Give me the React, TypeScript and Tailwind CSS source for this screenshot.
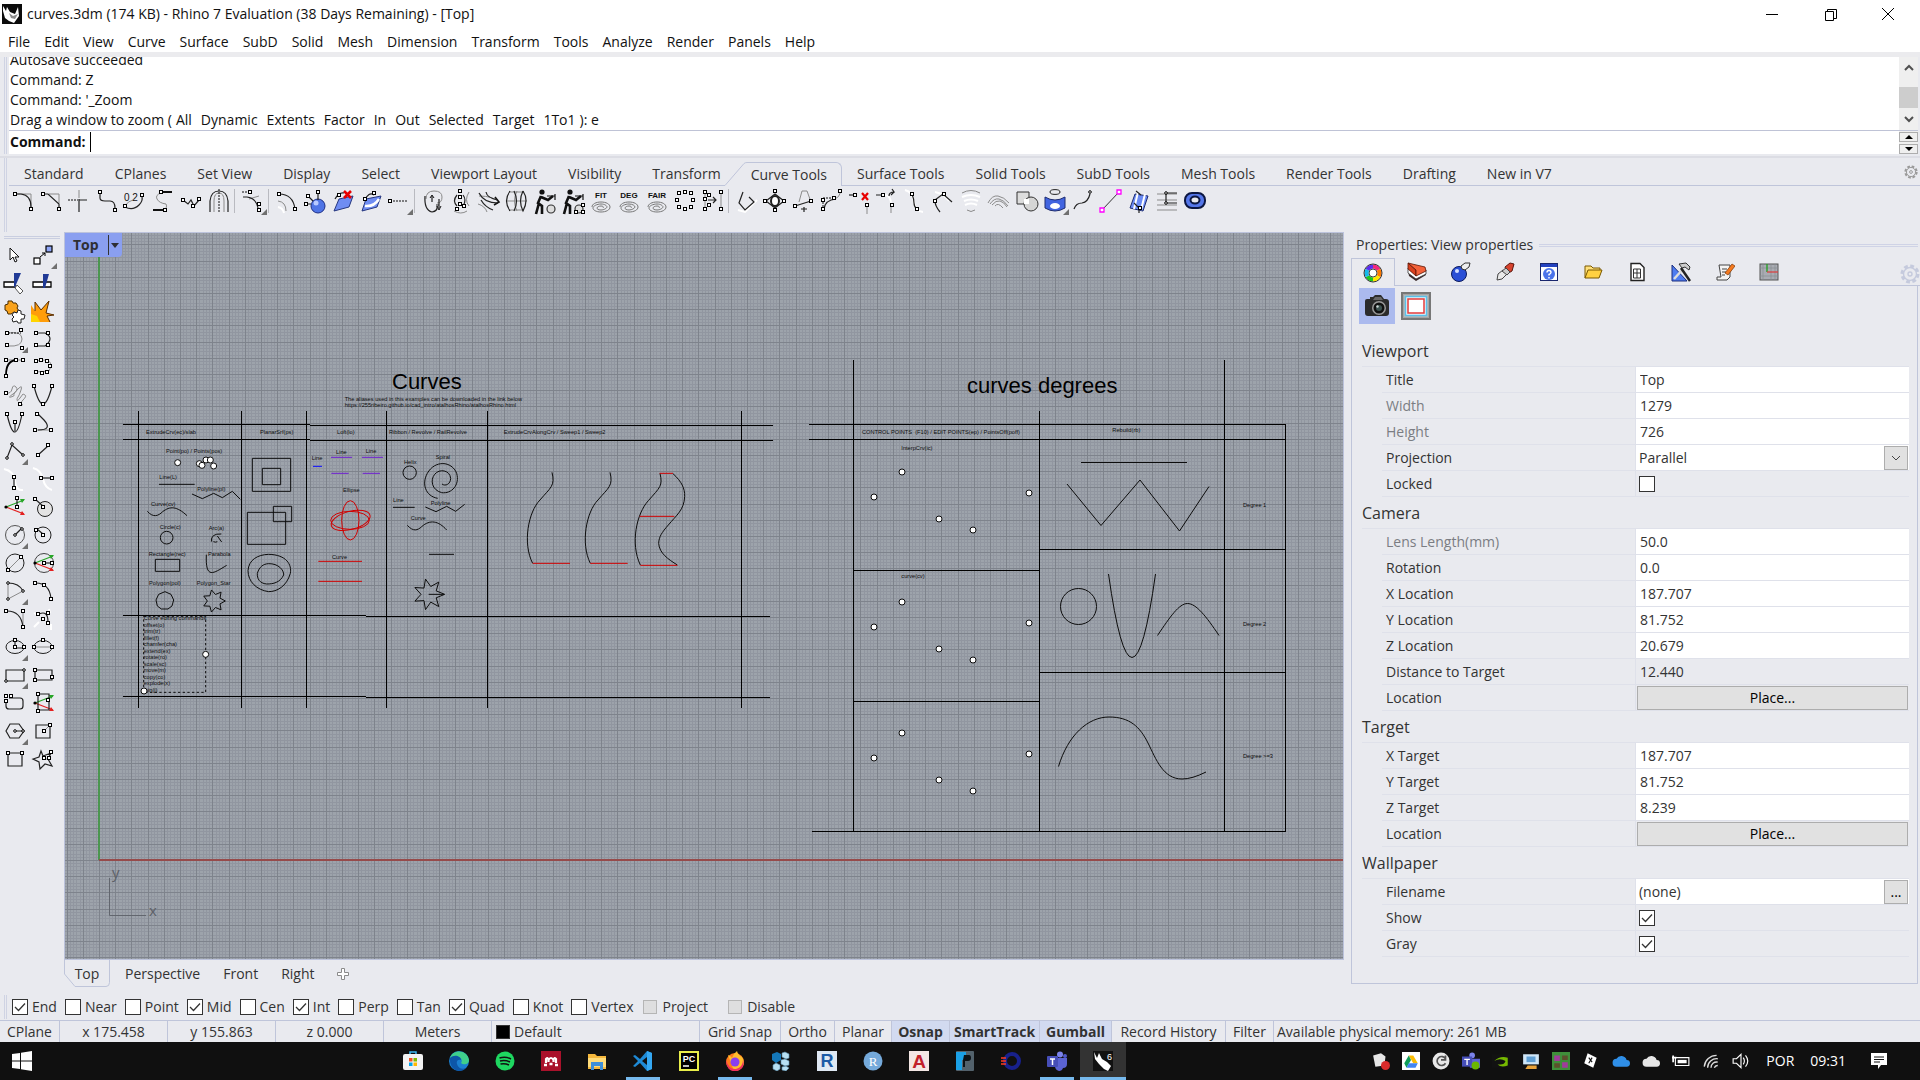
import React from "react";

type Pt = [number, number];

interface IconSpec {
  d?: string;
  g?: string;
  w?: string;
  dash?: string;
  pts?: Pt[];
  dots?: Pt[];
  more?: boolean;
  art?: React.ReactNode;
  name: string;
}

/* ---------- generic curve-tool glyph ---------- */
function Glyph({ spec }: { spec: IconSpec }) {
  return (
    <svg viewBox="0 0 28 28" className="size-7" fill="none" aria-hidden="true">
      {spec.w && <path d={spec.w} stroke="#fff" strokeWidth="2" />}
      {spec.g && <path d={spec.g} stroke="#8b8b8b" strokeWidth="1" />}
      {spec.dash && <path d={spec.dash} stroke="#111" strokeWidth="1" strokeDasharray="2 1" />}
      {spec.art}
      {spec.d && <path d={spec.d} stroke="#222" strokeWidth="1.2" />}
      {spec.pts?.map(([x, y], i) => (
        <rect key={i} x={x - 1.5} y={y - 1.5} width="3" height="3" fill="#fff" stroke="#000" strokeWidth="1" />
      ))}
      {spec.dots?.map(([x, y], i) => (
        <circle key={i} cx={x} cy={y} r="1.3" fill="#fff" stroke="#000" strokeWidth="1" />
      ))}
      {spec.more && <path d="M28 22v6h-6z" fill="#707070" />}
    </svg>
  );
}

const AXES = (
  <>
    <path d="M6 14L24 7" stroke="#27a527" strokeWidth="1.2" />
    <path d="M25 6l-5 0 2 4z" fill="#27a527" />
    <path d="M6 14L24 21" stroke="#e32020" strokeWidth="1.2" />
    <path d="M25 22l-5 0 2-4z" fill="#e32020" />
    <circle cx="6" cy="14" r="1.6" fill="#000" />
  </>
);

const SWIRL = (
  <path
    d="M5 20c0-3 4-5 9-5s9 2 9 5-4 5-9 5-8-2-8-4 4-4 8-4 6 2 6 3-3 3-6 3-4-1-4-2 2-2 4-2 3 1 2 2"
    stroke="#777"
    strokeWidth="1"
  />
);

function swirlWith(text: string) {
  return (
    <>
      <text x="14" y="11" textAnchor="middle" fontSize="8" fontWeight="700" fontFamily="Liberation Sans" fill="#111">
        {text}
      </text>
      {SWIRL}
    </>
  );
}

const RUNNER = (
  <>
    <circle cx="11" cy="5" r="2.6" fill="#111" />
    <path d="M10 9l-3 7 4 3v8M8 16l-3 11M10 10l7 3 5-4" stroke="#111" strokeWidth="2.6" />
    <path d="M16 9h8M24 7v6" stroke="#111" strokeWidth="1.2" />
    <circle cx="20" cy="22" r="4" stroke="#333" strokeWidth="1.2" fill="#ddd" />
  </>
);

const TOP_GROUPS: IconSpec[][] = [
  [
    { name: "Fillet curves", g: "M8 7h14v13", d: "M8 7h4Q22 8 22 20", pts: [[6, 7], [22, 22]] },
    { name: "Chamfer curves", g: "M12 7h10v9", d: "M8 7h3l11 10v4", pts: [[6, 7], [22, 22]] },
    { name: "Connect", g: "M14 3v8", dash: "M3 13h10", d: "M14 12v13M14 13h8" },
    { name: "Blend curves", d: "M7 6v5q0 3 5 3h5q5 0 5 7", pts: [[7, 5], [22, 23]] },
    {
      name: "Arc blend",
      g: "M4 19q3-5 8-6",
      d: "M4 20q8 4 14-2 4-4 3-8",
      art: (
        <text x="3" y="14" fontSize="10" fontFamily="Liberation Sans" fill="#111">0 2</text>
      ),
      pts: [[21, 8], [4, 19]],
    },
    { name: "Match curve", g: "M12 6q-6 2-4 6t9 5q2 4-3 6", art: <path d="M12 5h11M4 23h11" stroke="#111" strokeWidth="2" />, pts: [[12, 5], [16, 23]] },
    { name: "Symmetry", d: "M6 13l5 4 3-4 3 6 5-6", pts: [[6, 13], [22, 12], [16, 19]] },
    { name: "Offset curve", g: "M9 25V14q0-8 5-8t5 8v11", d: "M5 25V14q1-10 9-10t9 10v11", dash: "M14 2v24" },
  ],
  [{ name: "Adjustable blend", dash: "M3 5h10", d: "M4 10h4q9 1 11 11", g: "M10 12l10-3", pts: [[11, 5], [20, 17], [20, 23]], more: true }],
  [
    { name: "Tween curves", g: "M5 14q8 1 8 10", d: "M6 7q14 0 16 15", pts: [[6, 7], [22, 22]], w: "M5 20q5 1 6 6" },
    {
      name: "Project curve",
      art: (<><circle cx="17" cy="19" r="7" fill="#4f74e6" stroke="#1d2f86" /><circle cx="15" cy="16" r="2.5" fill="#b8c9ff" /></>),
      d: "M8 10l4 4M17 3v10M4 17h6",
      pts: [[17, 5], [5, 17], [7, 9]],
    },
    {
      name: "Pull curve",
      art: (<><path d="M10 12l14-3-4 11-15 4z" fill="#6f8df3" stroke="#26377f" /><path d="M15 4l7 7M22 4l-7 7" stroke="#e80000" strokeWidth="2.6" /></>),
      d: "M6 12q4-7 9-6",
      pts: [[10, 8]],
    },
    {
      name: "Curve on surface",
      art: (<><path d="M9 12l15-3-4 11-15 4z" fill="#6f8df3" stroke="#26377f" /><path d="M8 19q9 1 14-7" stroke="#fff" strokeWidth="2.5" /></>),
      d: "M7 14q5-10 10-6",
      pts: [[8, 12], [17, 6]],
    },
    { name: "Extract isocurve", dash: "M5 14h18", pts: [[5, 14]], more: true },
  ],
  [
    { name: "Revolve section", g: "M7 12q0-8 8-8t8 6-5 6", d: "M6 9q-1 14 7 16 6-1 5-6M13 9v6M20 12v9M17 18h3", art: <path d="M11 11l2-3 2 3M18 19l2 4 2-4" stroke="#111" /> },
    { name: "Cross section", g: "M7 24q7 4 13 0M22 5q-5 8 0 14", d: "M10 8q-5 6 0 11M16 8q4 5 0 11", pts: [[13, 4], [13, 10], [13, 17], [10, 22], [17, 19]] },
    { name: "Flow", g: "M4 9q14 0 20 6M3 17q7 2 9 8", d: "M4 6q5 10 19 10M6 13q4 7 12 10M11 5q1 6 12 8", art: <path d="M20 10l4 5-5 3" stroke="#111" strokeWidth="1.600" /> },
    { name: "Contour", g: "M6 5h15M6 23h15M14 4q-5 10 0 20M4 14h20", d: "M7 4q-7 10 0 20M11 4q5 10 0 20M20 4q6 9 0 20q-5-10 0-20" },
    { name: "Rebuild curve", art: RUNNER },
    { name: "Rebuild master", art: RUNNER, pts: [[24, 18], [17, 25], [24, 25]] },
    { name: "Fit curve", art: swirlWith("FIT") },
    { name: "Change degree", art: swirlWith("DEG") },
    { name: "Fair curve", art: swirlWith("FAIR") },
    { name: "Make periodic", pts: [[8, 6], [14, 5], [20, 6], [6, 13], [22, 13], [8, 20], [20, 20], [14, 22]] },
    { name: "Simplify", g: "M6 5v18M22 5v18", d: "M9 13h8M14 10l3 3-3 3", pts: [[6, 5], [6, 12], [6, 22], [22, 5], [22, 22], [10, 8], [10, 18]] },
  ],
  [
    { name: "Close curve", w: "M5 23l7 2 12-12", d: "M10 5L6 16l6 7 9-8-5-5" },
    { name: "Edit points", d: "M14 7l9 7-9 7-9-7z", art: <ellipse cx="14" cy="14" rx="4" ry="5" fill="#fff" stroke="#222" strokeWidth="2" />, pts: [[14, 4], [14, 23], [4, 14], [23, 14]] },
    { name: "Handlebar", g: "M10 15l3-11h5l4 11", d: "M6 19l16-5M15 20v5M12 22h6", pts: [[6, 19], [22, 14]] },
    { name: "Insert knot", g: "M17 12q7-2 6-9", dash: "M6 11h12M6 12v10", d: "M7 22q1-9 12-10", pts: [[6, 22], [23, 4], [17, 11], [6, 13]] },
    { name: "Delete knot", g: "M22 18v9", art: <path d="M17 6l6 7M23 6l-6 7" stroke="#e80000" strokeWidth="2.2" />, pts: [[10, 8], [22, 18]], d: "M4 8h5" },
    { name: "Insert kink", g: "M18 18v8", w: "M12 8q6 1 6 9", d: "M3 8h7M16 9q0-4 5-4l-2-3M21 5l-3 3", pts: [[10, 8], [19, 18]] },
    { name: "End bulge", w: "M4 3q8 2 9 12 1 9 9 10", d: "M11 7q2 5 2 9t3 6", pts: [[11, 7], [16, 22]] },
    { name: "Blend edge", w: "M6 5q9 2 14 9", d: "M6 13L14 7l9 8M6 14q0 5 5 11", pts: [[6, 14], [15, 7]] },
    { name: "Helix", g: "M5 6q9-5 18 0M10 23q4 3 8 0", w: "M5 10q9-4 18 0M7 14q7-3 14 0M8 18q6-3 12 0" },
    { name: "Offset multiple", g: "M3 16q4-8 10-7t11 7M5 17q4-6 9-5t9 7M7 18q4-5 8-4t7 6M10 19q3-4 8 2" },
    { name: "Curve boolean", art: (<><path d="M4 5h12v12H4z" fill="#ddd" stroke="#333" /><circle cx="18" cy="17" r="7" fill="#d5d5d5" stroke="#333" /><path d="M11 12h5v5h-5z" fill="#fff" /></>) },
    { name: "Smash surface", art: (<><path d="M4 10q10 6 20 0v11q-10 6-20 0z" fill="#4164e0" stroke="#1e2c70" /><ellipse cx="14" cy="19" rx="5" ry="3" fill="#fff" /><ellipse cx="14" cy="5" rx="5" ry="2.4" stroke="#222" /></>), more: true },
    { name: "Sketch", d: "M5 22q2-6 8-6 6-1 8-9", dots: [[21, 5]] },
    { name: "Mesh intersection line", art: (<><path d="M5 23L22 5" stroke="#333" /><path d="M3 21h4v4H3zM20 3h4v4h-4z" fill="#fff" stroke="#f0f" strokeWidth="1.3" /></>) },
    { name: "Plane cut", art: (<><path d="M10 7l13 2-5 15-13-3z" fill="#6c8cf5" stroke="#1e2c70" /><path d="M13 5l-4 17M20 7l-4 16" stroke="#fff" strokeWidth="2" /></>), d: "M11 4l5 4M14 20v6M9 16l6 6", pts: [[15, 21]] },
    { name: "Curve layout", g: "M4 7h20M4 13h20M4 18h20M4 23h20", d: "M13 6h11M13 16h11M13 6v10", dots: [[13, 6], [13, 16]] },
    { name: "SubD ring", art: (<><rect x="4" y="6" width="20" height="15" rx="7" fill="#5577ea" stroke="#0c1742" strokeWidth="2" /><ellipse cx="14" cy="13" rx="4.500" ry="3.500" fill="#e9eaef" stroke="#0c1742" strokeWidth="2" /></>) },
  ],
];

const SIDE_ICONS: IconSpec[] = [
  { name: "Select", art: <path d="M10 7v12l3-3 2 5 2-1-2-4h4z" fill="#fff" stroke="#111" /> },
  { name: "Drag", art: (<><rect x="17" y="5" width="6" height="6" fill="#8fa6f7" stroke="#000" strokeWidth="1.2" /><rect x="5" y="17" width="6" height="6" fill="#fff" stroke="#000" strokeWidth="1.2" /><path d="M11 16l5-4M13 12h3v3" stroke="#000" /></>), more: true },
  { name: "Trim", art: (<><path d="M4 13h11v5H4z" fill="#fff" stroke="#000" strokeWidth="1.3" /><path d="M14 4h7l-6 14h-1z" fill="#203a96" /><path d="M17 16l6 6-3 3-5-6z" fill="#fff" stroke="#555" /></>) },
  { name: "Split", art: (<><path d="M4 13h18v5H4z" fill="#fff" stroke="#000" strokeWidth="1.3" /><path d="M14 5h6l-4 14h-2z" fill="#203a96" /></>) },
  {
    name: "Join",
    art: (
      <>
        <path d="M5 8l3-1 0-3 4 0 1 2 3 0 2 3-1 2 2 3-3 2-2-1-3 2-3 0-1-3-2-1 0-3z" fill="#f9a21b" stroke="#4a2c00" />
        <path d="M14 15l3 1 1-3 3 1 0 3 4 1-1 4-3 0 0 4-3 0-1-2-4 1-1-3 2-2-2-2z" fill="#fff" stroke="#222" />
      </>
    ),
  },
  { name: "Explode", art: (<><path d="M2 8l4 6V5l6 8 8-9-3 12 8 2-7 1 3 6H2z" fill="#ff9d0a" /><path d="M2 17l6 2 3 6H2z" fill="#ffd400" /><path d="M6 14V5l6 8 8-9-3 12 8 2-7 1 3 6" stroke="#5b2e00" /></>) },
  { name: "Control point curve", g: "M8 8q14-2 14 6t-14 7", dash: "M8 8h13", pts: [[7, 8], [7, 20], [21, 5], [22, 23]], more: true },
  { name: "Interpolated curve", d: "M8 8h8q10 5 0 13H8", pts: [[7, 8], [19, 8], [7, 20], [19, 20]] },
  { name: "Handle curve", g: "M6 7h18", art: <path d="M6 22q0-14 10-15" stroke="#000" strokeWidth="1.800" />, pts: [[6, 7], [16, 7], [23, 7], [6, 23]] },
  { name: "Point curve", g: "M7 8q20-4 13 10l-13 1", pts: [[7, 8], [12, 7], [18, 8], [21, 13], [18, 19], [13, 20], [7, 19]] },
  { name: "Spiral helix", g: "M6 12q5 1 6-4t4-2-3 7-2 3 3-2 4-6 3 1-3 7-1 3 3-2 3-4 2 1-2 5 0 5", pts: [[6, 12], [20, 23]] },
  { name: "Parabola focus", d: "M5 5q9 36 18 0", pts: [[5, 5], [23, 5], [14, 23]] },
  { name: "Parabola vertex", d: "M7 5q8 36 15 0M15 13v9", pts: [[7, 5], [22, 5], [15, 13]] },
  { name: "Conic", d: "M9 5l6 6q9 10-6 10", g: "M7 21h15", pts: [[8, 5], [6, 21], [22, 21]] },
  { name: "Polyline", d: "M7 21l5-13 11 10", dots: [[7, 21], [12, 7], [23, 18]], more: true },
  { name: "Line", d: "M9 18L19 9", pts: [[9, 18], [19, 8]] },
  { name: "Perpendicular line", w: "M4 4q10 2 11 12t8 9", d: "M14 11v11", pts: [[14, 12], [14, 23]] },
  { name: "Tangent line", w: "M4 3q8 2 10 11t9 11", d: "M13 13h10", pts: [[12, 13], [23, 13]] },
  { name: "Line by axes", art: AXES, d: "M17 5v9", pts: [[17, 5], [17, 14]] },
  { name: "Circle tangent", art: <circle cx="16" cy="16" r="7.5" fill="#e3e3e3" stroke="#222" />, d: "M6 6l9 8", pts: [[6, 6], [14, 14]] },
  { name: "Circle", art: <circle cx="15" cy="14" r="9.5" stroke="#555" />, d: "M15 14l7-7", dots: [[15, 14], [22, 8]], more: true },
  { name: "Circle center", art: <circle cx="14" cy="14" r="8" stroke="#222" />, d: "M8 8l6 5", pts: [[7, 9], [14, 14]] },
  { name: "Circle diameter", art: <circle cx="15" cy="14" r="9" stroke="#222" />, g: "M8 21L21 8", pts: [[8, 21], [21, 8]] },
  { name: "Circle by axes", art: (<><circle cx="15" cy="14" r="9.5" stroke="#444" />{AXES}</>), d: "M15 14h7", pts: [[15, 14], [23, 14]] },
  { name: "Arc", g: "M8 22V5M8 22l15-8", d: "M8 6q11 0 15 8", dots: [[8, 6], [23, 14], [8, 22]], more: true },
  { name: "Arc start end", d: "M7 6q13 0 15 15", pts: [[6, 6], [15, 8], [22, 22]] },
  { name: "Arc tangent", g: "M23 7v15", d: "M7 6q14 0 16 16", pts: [[6, 6], [23, 6], [23, 22]] },
  { name: "Arc through points", w: "M5 22l5-5M5 8l5 3M22 25v-6M20 4l1 4", d: "M10 9q9-4 9 8", pts: [[9, 9], [19, 8], [14, 14], [19, 18]] },
  { name: "Ellipse", art: <ellipse cx="15" cy="14" rx="9" ry="6.5" stroke="#222" />, d: "M15 8v7h8", pts: [[15, 7], [15, 14], [24, 14]], more: true },
  { name: "Ellipse diameter", art: <ellipse cx="14" cy="14" rx="9" ry="6.5" stroke="#222" />, g: "M5 14h18", pts: [[5, 14], [23, 14], [14, 7]] },
  { name: "Rectangle", d: "M6 9h18v11H6z", dots: [[24, 9], [6, 20]], more: true },
  { name: "Rectangle center", d: "M6 9h17v10H6z", pts: [[6, 9], [6, 19], [23, 16]] },
  { name: "Rounded rectangle", d: "M9 9h11q3 0 3 3v5q0 3-3 3h-11q-3 0-3-3v-6", pts: [[6, 7], [11, 7], [6, 12]] },
  { name: "Rectangle by axes", art: AXES, d: "M9 5h11v16H9z", pts: [[9, 5], [9, 22], [19, 11]] },
  { name: "Polygon", d: "M10 7h9l5 7-5 7h-9l-4-7z M15 14h8", dots: [[15, 14], [23, 14]], more: true },
  { name: "Square polygon", d: "M7 8h14v13H7z", g: "M15 14l6-6", pts: [[15, 14], [21, 8]] },
  { name: "Square edge", d: "M8 8h14v13H8z", pts: [[8, 8], [22, 8]] },
  { name: "Star", g: "M14 14h6", d: "M12 6l2 5 8-3-3 6 4 7-7-2-5 5-1-7-6-3 6-2z", pts: [[15, 13], [20, 13], [22, 7]] },
];

/* ---------- shared pieces ---------- */
function CheckBox({ id, label, checked = false, disabled = false }: { id: string; label?: string; checked?: boolean; disabled?: boolean }) {
  return (
    <span className="relative grid shrink-0 place-items-center">
      <input
        id={id}
        type="checkbox"
        aria-label={label}
        defaultChecked={checked}
        disabled={disabled}
        className="peer size-4 appearance-none border border-[#333] bg-white disabled:size-3.5 disabled:border-[#b5b5b5] disabled:bg-[#dededf]"
      />
      <svg viewBox="0 0 16 16" className="pointer-events-none absolute hidden size-4 peer-checked:block" fill="none">
        <path d="M3 8l3.5 3.5L13 4.500" stroke="#333" strokeWidth="1.3" />
      </svg>
    </span>
  );
}

function Gear({ className }: { className: string }) {
  return (
    <svg viewBox="0 0 20 20" className={className} fill="none" stroke="currentColor" aria-hidden="true">
      <circle cx="10" cy="10" r="8" strokeWidth="3" strokeDasharray="3.8 2.480" />
      <circle cx="10" cy="10" r="6.500" strokeWidth="1.400" />
      <circle cx="10" cy="10" r="2" strokeWidth="1.400" />
    </svg>
  );
}

/* ---------- title, menu, command ---------- */
const MENUS = ["File", "Edit", "View", "Curve", "Surface", "SubD", "Solid", "Mesh", "Dimension", "Transform", "Tools", "Analyze", "Render", "Panels", "Help"];

function RhinoLogo({ className }: { className: string }) {
  return (
    <svg viewBox="0 0 20 20" className={className} aria-hidden="true">
      <rect width="20" height="20" fill="#0b0b0b" />
      <path d="M1 2l3 5 1-4 3 5 5 2 3-7 1 9-5 7-5-2-4-3-2-7z" fill="#fff" />
      <path d="M7 9l4 3 5-2-3 5-4-1z" fill="#8d8d8d" />
    </svg>
  );
}

function TitleBar() {
  return (
    <header className="bg-white">
      <div className="flex h-7 items-center pl-0.5 pr-[3px]">
        <RhinoLogo className="size-5" />
        <h1 className="ml-[5px] flex-1 text-sm">curves.3dm (174 KB) - Rhino 7 Evaluation (38 Days Remaining) - [Top]</h1>
        <button aria-label="Minimize" className="grid h-7 w-[58px] place-items-center">
          <svg viewBox="0 0 12 12" className="size-3"><path d="M0 6.500h12" stroke="#000" /></svg>
        </button>
        <button aria-label="Restore" className="grid h-7 w-[58px] place-items-center">
          <svg viewBox="0 0 13 13" className="size-[13px]" fill="none" stroke="#000"><path d="M1.500 3.500h8v9h-8zM3.500 3.500v-2h9v9h-3" /></svg>
        </button>
        <button aria-label="Close" className="grid h-7 w-[58px] place-items-center">
          <svg viewBox="0 0 12 12" className="size-3" fill="none" stroke="#000"><path d="M0 0l12 12M12 0L0 12" /></svg>
        </button>
      </div>
      <nav className="flex h-6 items-center pl-px pt-[3px] text-sm">
        {MENUS.map((m) => (
          <button key={m} className="px-[7px]">{m}</button>
        ))}
      </nav>
    </header>
  );
}

const ZOOM_OPTIONS = ["All", "Dynamic", "Extents", "Factor", "In", "Out", "Selected", "Target", "1To1"];

function CommandArea() {
  return (
    <section className="flex border-b-2 border-t-[5px] border-[#dcdde4] border-t-[#ebebee] pb-0.5 pl-1 text-sm">
      <div className="mr-0.5 w-[3px] shrink-0 border-x border-[#cfd3e3]" />
      <div className="flex min-w-0 flex-1 flex-col bg-white">
        <div className="flex h-[73px] flex-col justify-end overflow-hidden leading-5">
          {["Autosave succeeded", "Command: Z", "Command: '_Zoom"].map((t) => (
            <p key={t} className="shrink-0 pl-px">{t}</p>
          ))}
          <p className="flex shrink-0 gap-1 whitespace-pre pl-px">
            Drag a window to zoom (
            <span className="flex gap-[9px]">
              {ZOOM_OPTIONS.map((o) => (
                <button key={o}>{o}</button>
              ))}
            </span>
            ): e
          </p>
        </div>
        <div className="flex h-6 items-center border-t border-[#bfc3d6] pb-0.5 pl-px">
          <label htmlFor="cmd" className="font-bold">Command:</label>
          <span className="ml-1 h-5 w-px bg-black" />
          <input id="cmd" className="flex-1 outline-none" />
        </div>
      </div>
      <div className="mr-0.5 flex w-[19px] flex-col bg-[#efefef]">
        <div className="flex h-[73px] flex-col items-center">
          <button aria-label="Scroll up" className="grid h-[22px] place-items-center">
            <svg viewBox="0 0 10 8" className="h-2 w-2.5" fill="none"><path d="M1 6l4-4 4 4" stroke="#505050" strokeWidth="2" /></svg>
          </button>
          <span className="mt-2 h-[21px] w-full bg-[#cdcdcd]" />
          <button aria-label="Scroll down" className="grid h-[22px] place-items-center">
            <svg viewBox="0 0 10 8" className="h-2 w-2.5" fill="none"><path d="M1 2l4 4 4-4" stroke="#505050" strokeWidth="2" /></svg>
          </button>
        </div>
        <div className="flex h-6 flex-col gap-0.5 border-t border-[#bfc3d6] pt-px">
          <button aria-label="Previous command" className="grid h-2.5 place-items-center border border-[#adadad] bg-[#efefef]">
            <svg viewBox="0 0 8 4" className="h-1 w-2"><path d="M4 0l4 4H0z" /></svg>
          </button>
          <button aria-label="Next command" className="grid h-2.5 place-items-center border border-[#adadad] bg-[#efefef]">
            <svg viewBox="0 0 8 4" className="h-1 w-2"><path d="M0 0h8L4 4z" /></svg>
          </button>
        </div>
      </div>
    </section>
  );
}

/* ---------- tool tabs ---------- */
const TABS_BEFORE = ["Standard", "CPlanes", "Set View", "Display", "Select", "Viewport Layout", "Visibility", "Transform"];
const TABS_AFTER = ["Surface Tools", "Solid Tools", "SubD Tools", "Mesh Tools", "Render Tools", "Drafting", "New in V7"];

function ToolTabs() {
  return (
    <section className="flex h-[74px] flex-col pl-1">
      <div className="flex flex-1 items-stretch">
        <div className="mr-0.5 w-[3px] shrink-0 border-x border-[#cfd3e3]" />
        <div className="min-w-0 flex-1">
          <div className="flex h-7 items-end text-sm text-[#333]">
            {TABS_BEFORE.map((t, i) => (
              <button key={t} className={"h-full whitespace-nowrap border-b border-[#bfc5da] pt-[5px] " + (i === 7 ? "pl-[15px]" : "pl-[15px] pr-4")}>{t}</button>
            ))}
            <svg viewBox="0 0 30 24" className="h-6 w-[30px] shrink-0" fill="none">
              <path d="M0 23.500h4L23 1.500q1-1 3-1h4" stroke="#bfc5da" />
            </svg>
            <button className="h-6 whitespace-nowrap rounded-tr-md border-r border-t border-[#bfc5da] pr-3.5">Curve Tools</button>
            {TABS_AFTER.map((t) => (
              <button key={t} className="h-full whitespace-nowrap border-b border-[#bfc5da] pl-[15px] pr-4 pt-[5px]">{t}</button>
            ))}
            <div className="flex h-full flex-1 items-center justify-end border-b border-[#bfc5da] pr-0.5 text-[#9a9a9a]">
              <button aria-label="Toolbar options"><Gear className="size-3.5" /></button>
            </div>
          </div>
          <div className="flex items-center pt-px">
            {TOP_GROUPS.map((g, gi) => (
              <React.Fragment key={gi}>
                {gi > 0 && <span className="ml-px mr-1 h-6 w-px bg-[#b9bac0]" />}
                {g.map((s) => (
                  <button key={s.name} title={s.name}><Glyph spec={s} /></button>
                ))}
              </React.Fragment>
            ))}
          </div>
        </div>
      </div>
    </section>
  );
}

/* ---------- viewport drawing ---------- */
const STEP = 16.2;

function gridPath(minor: boolean) {
  const parts: string[] = [];
  const div = minor ? STEP / 5 : STEP;
  for (let k = -200; k < 720; k++) {
    if (minor && k % 5 === 0) continue;
    const x = Math.round(99 + k * div) + 0.5;
    const y = Math.round(860 + k * div) + 0.5;
    if (x > 60 && x < 2400) parts.push(`M${x} 225V1400`);
    if (y > 225 && y < 1400) parts.push(`M60 ${y}H2400`);
  }
  return parts.join("");
}

const MINOR = gridPath(true);
const MAJOR = gridPath(false);

function T({ x, y, children }: { x: number; y: number; children: React.ReactNode }) {
  return <text x={x} y={y} className="whitespace-pre" fill="#0c0c0c" stroke="none">{children}</text>;
}

function Nodes({ at, r }: { at: Pt[]; r: number }) {
  return (
    <>
      {at.map(([x, y], i) => (
        <circle key={i} cx={x} cy={y} r={r} fill="#fff" />
      ))}
    </>
  );
}

function star(cx: number, cy: number, ro: number, ri: number, n: number) {
  const p: string[] = [];
  for (let i = 0; i < n * 2; i++) {
    const a = (i * Math.PI) / n;
    const r = i % 2 ? ri : ro;
    p.push(`${(cx + r * Math.cos(a)).toFixed(1)} ${(cy + r * Math.sin(a)).toFixed(1)}`);
  }
  return "M" + p.join("L") + "Z";
}

const EDIT_LINES = ["Curve editing commands", "offset(o)", "trim(tr)", "fillet(f)", "chamfer(cha)", "extend(ex)", "rotate(ro)", "scale(sc)", "move(m)", "copy(co)", "explode(x)", "join(j)"];

const DEGREE_NODES: Pt[] = [[874, 497], [902, 472], [939, 519], [973, 530], [1029, 493]];

function CadDrawing() {
  return (
    <svg className="block size-full" fill="none" role="img" aria-label="Top view drawing">
      <g transform="translate(-65 -233)">
        <path d={MINOR} stroke="#9196a0" shapeRendering="crispEdges" />
        <path d={MAJOR} stroke="#7e838c" shapeRendering="crispEdges" />
        <path d="M99 225V860" stroke="#4b9650" strokeWidth="2" shapeRendering="crispEdges" />
        <path d="M99 860H2400" stroke="#964b4b" strokeWidth="2" shapeRendering="crispEdges" />

        <g fontFamily="Liberation Sans" fill="#000" fontSize="22">
          <text x="392" y="389">Curves</text>
          <text x="967" y="393">curves degrees</text>
        </g>

        <g stroke="#000" strokeWidth="1" shapeRendering="crispEdges">
          <path d="M138.500 411V708M241.500 411V708M306.500 411V708M386.500 411V708M487.500 411V708M741.500 411V708" />
          <path d="M123 424.500H310M310 425.500H773M123 439.500H310M310 440.500H773M123 615.500H366M366 616.500H770M123 696.500H366M366 697.500H770" />
          <path d="M853.500 360V831M1039.500 411V831M1224.500 360V831M1285.500 424V831" />
          <path d="M809 424.500H1285M809 439.500H1285M1039 549.500H1285M853 570.500H1039M1039 672.500H1285M853 701.500H1039M812 831.500H1286" />
        </g>

        {/* curve catalogue, drawn at three units per pixel */}
        <g transform="translate(120 360) scale(0.33333)" fontFamily="Liberation Sans" fontSize="17" stroke="#0c0c0c" strokeWidth="3">
          <T x={674} y={123}>The aliases used in this examples can be downloaded in the link below</T>
          <T x={674} y={141}>https://255ribeiro.github.io/cad_intro/atalhosRhino/atalhosRhino.html</T>
          <T x={78} y={221}>ExtrudeCrv(ec)/slab</T>
          <T x={420} y={223}>PlanarSrf(ps)</T>
          <T x={651} y={221}>Loft(lo)</T>
          <T x={807} y={221}>Ribbon / Revolve / RailRevolve</T>
          <T x={1151} y={221}>ExtrudeCrvAlongCrv / Sweep1 / Sweep2</T>
          <T x={138} y={279}>Point(po) / Points(pos)</T>
          <T x={118} y={358}>Line(L)</T>
          <T x={232} y={394}>Polyline(pl)</T>
          <T x={93} y={438}>Curve(cv)</T>
          <T x={119} y={506}>Circle(c)</T>
          <T x={266} y={510}>Arc(a)</T>
          <T x={86} y={587}>Rectangle(rec)</T>
          <T x={264} y={587}>Parabola</T>
          <T x={87} y={676}>Polygon(pol)</T>
          <T x={230} y={674}>Polygon_Star</T>
          <T x={575} y={301}>Line</T>
          <T x={648} y={281}>Line</T>
          <T x={737} y={279}>Line</T>
          <T x={669} y={397}>Ellipse</T>
          <T x={636} y={597}>Curve</T>
          <T x={852} y={312}>Helix</T>
          <T x={947} y={296}>Spiral</T>
          <T x={819} y={427}>Line</T>
          <T x={932} y={434}>Polyline</T>
          <T x={872} y={481}>Curve</T>
          {EDIT_LINES.map((l, i) => (
            <T key={l} x={71} y={781 + i * 19.500}>{l}</T>
          ))}

          <path d="M117 373H224M216 402L247 416 281 400 307 413 337 394 361 418M82 454C100 474 115 468 128 455C150 438 170 438 201 467" />
          <circle cx="140" cy="533" r="19" />
          <path d="M274 545Q272 520 304 522M280 545Q288 548 292 545M292 528L305 546" />
          <path d="M106 598h73v36h-73zM259 584C256 660 280 640 320 616" />
          <path d="M135 695l18 8 8 17-5 18-12 9h-20l-12-9-4-18 8-17z" />
          <path d={star(282, 723, 34, 20, 7)} />
          <Nodes at={[[173, 308], [238, 311], [258, 300], [271, 300], [246, 316], [281, 318]]} r={9} />
          <path d="M397 295h115v99H397zM427 325h55v49h-55zM382 457h115v96H382zM460 439h55v46h-55z" />
          <path d="M446 583C500 584 516 615 511 640C500 680 470 695 446 695C410 690 384 665 384 632C386 600 412 584 446 583Z" />
          <path d="M445 611C475 610 492 630 491 645C480 668 460 672 440 672C418 670 411 655 412 640C418 620 430 612 445 611Z" />
          <path d="M579 319h27" stroke="#0a0aff" />
          <path d="M633 292h63M726 292h63M634 340h52M728 340h52" stroke="#6e1fd0" />
          <g stroke="#d00000">
            <ellipse cx="691" cy="481" rx="26" ry="59" />
            <ellipse cx="690" cy="481" rx="58" ry="27" />
            <ellipse cx="692" cy="481" rx="60" ry="27" transform="rotate(-15 692 481)" />
            <path d="M595 604h131M595 664h131" />
          </g>
          <circle cx="869" cy="338" r="20" />
          <path d="M953 415C915 408 905 370 922 340C944 300 995 302 1010 340C1020 375 995 402 965 398C935 390 930 360 944 343C958 325 990 330 992 355C992 372 976 380 966 372" />
          <path d="M819 442h65M916 441L948 455 980 439 1007 454 1034 433M862 496C880 516 893 511 905 500C930 478 955 482 980 510M927 583h75M926 703h46" />
          <path d={star(927, 703, 47, 24, 7)} />
          <path d="M71 769H257V997H71Z" strokeDasharray="7 7" />
          <Nodes at={[[257, 883], [72, 993]]} r={9} />
        </g>

        <g transform="translate(480 400) scale(0.33333)" stroke="#0c0c0c" strokeWidth="3">
          <path d="M216 217C226 258 212 262 180 300C145 335 127 430 158 490" />
          <path d="M390 217C400 258 386 262 354 300C319 335 301 430 331 490" />
          <path d="M540 220C549 258 540 262 505 302C470 340 450 430 481 495" />
          <path d="M579 221C605 245 615 265 614 290C612 330 590 345 565 375C545 398 537 410 536 430C538 460 565 478 592 495" />
          <path d="M158 490h112M331 490h112M539 220h40M479 349h104M481 496h111" stroke="#d00000" />
        </g>

        <g transform="translate(840 360) scale(0.33333)" fontFamily="Liberation Sans" fontSize="17">
          <T x={66} y={223}>CONTROL POINTS  (F10) / EDIT POINTS(ep) / PointsOff(poff)</T>
          <T x={817} y={217}>Rebuild(rb)</T>
          <T x={184} y={270}>InterpCrv(ic)</T>
          <T x={184} y={655}>curve(cv)</T>
          <T x={1209} y={442}>Degree 1</T>
          <T x={1209} y={799}>Degree 2</T>
          <T x={1209} y={1193}>Degree &gt;=3</T>
        </g>
        <g stroke="#0c0c0c">
          {[0, 130, 261].map((dy) => (
            <Nodes key={dy} at={DEGREE_NODES.map(([x, y]): Pt => [x, y + dy])} r={3} />
          ))}
          <path d="M1081 462.500H1187M1067 484L1101 525.500 1140 480 1179.500 531 1209 486.500" />
          <circle cx="1078.500" cy="606.500" r="18" />
          <path d="M1108.500 574Q1132 741 1155.500 574" />
          <path d="M1157.500 635.500C1170 617 1179 603.500 1187.500 603.500S1206 616 1219 635.500" />
          <path d="M1058.500 766.500C1068 735 1088 717 1109 717S1140 727 1148 743S1163 779 1182 779Q1192 779 1206 772" />
        </g>

        <path d="M109.500 878V915.500H146" stroke="#62666e" />
        <g fontFamily="Open Sans" fontSize="15" fill="#5d6168">
          <text x="112" y="878">y</text>
          <text x="149" y="916">x</text>
        </g>
      </g>
    </svg>
  );
}

function Viewport() {
  return (
    <main className="flex min-w-0 flex-1 flex-col">
      <div className="relative min-h-0 flex-1 overflow-hidden border border-[#bcc3dc] bg-[#9da3ab]">
        <CadDrawing />
        <button className="absolute left-0 top-0 flex h-6 items-center rounded-br bg-[#8a9ff0] text-sm font-bold text-[#2e2e33]">
          <span className="pl-2 pr-[9px] leading-5">Top</span>
          <span className="grid h-5 w-3.5 place-items-center border-l border-[#333]">
            <svg viewBox="0 0 8 5" className="h-[5px] w-2"><path d="M0 0h8L4 5z" fill="#2e2e33" /></svg>
          </span>
        </button>
      </div>
      <div className="flex h-[30px] items-start text-sm text-[#333]">
        <button className="relative h-7 w-[46px]">
          <svg viewBox="0 0 46 28" className="absolute inset-0 size-full" fill="none">
            <path d="M.5 0V14L11 26.500H42q3.500 0 3.500-4V0" stroke="#bfc5da" />
          </svg>
          Top
        </button>
        {["Perspective", "Front", "Right"].map((t) => (
          <button key={t} className="h-7 pl-[15px] pr-2">{t}</button>
        ))}
        <button aria-label="Add viewport" className="ml-3.5 h-7">
          <svg viewBox="0 0 12 12" className="size-3" fill="#fff" stroke="#8a8a8a"><path d="M4.500.5h3v4h4v3h-4v4h-3v-4h-4v-3h4z" /></svg>
        </button>
      </div>
    </main>
  );
}

function Sidebar() {
  return (
    <aside className="w-16 shrink-0 pt-1">
      <div className="mx-1 h-[3px] border-y border-[#c9cee0]" />
      <div className="grid w-[58px] grid-cols-2 pt-0.5">
        {SIDE_ICONS.map((s) => (
          <button key={s.name} title={s.name} className="h-7"><Glyph spec={s} /></button>
        ))}
      </div>
    </aside>
  );
}

/* ---------- properties panel ---------- */
const PANEL_TABS: { name: string; art: React.ReactNode }[] = [
  {
    name: "Properties",
    art: (
      <g strokeWidth="4" fill="none">
        <path d="M10 3.500a6.500 6.500 0 0 1 5.600 3.250" stroke="#f2267a" />
        <path d="M15.600 6.750a6.500 6.500 0 0 1 0 6.500" stroke="#ff7a00" />
        <path d="M15.600 13.250A6.500 6.500 0 0 1 10 16.500" stroke="#ffe600" />
        <path d="M10 16.500a6.500 6.500 0 0 1-5.600-3.250" stroke="#1fc61f" />
        <path d="M4.400 13.250a6.500 6.500 0 0 1 0-6.500" stroke="#16b9ea" />
        <path d="M4.400 6.750A6.500 6.500 0 0 1 10 3.500" stroke="#5b2df0" />
        <circle cx="10" cy="10" r="9" strokeWidth="1" stroke="#333" />
        <circle cx="10" cy="10" r="4" strokeWidth="1" stroke="#444" fill="#fff" />
      </g>
    ),
  },
  {
    name: "Layers",
    art: (
      <>
        <path d="M1 9l1 5 7 5 10-6v-4l-10 6z" fill="#3a2a2a" />
        <path d="M1 6l8 7 10-5v4L9 17 1 11z" fill="#fff" stroke="#333" strokeWidth=".8" />
        <path d="M1 1l8 7v6L1 7z" fill="#d9401d" stroke="#5b1505" strokeWidth=".8" />
        <path d="M1 1l17 4 1 4-10 5V8z" fill="#f4623a" stroke="#5b1505" strokeWidth=".8" />
      </>
    ),
  },
  {
    name: "Rendering",
    art: (
      <>
        <circle cx="8" cy="12" r="7.500" fill="#2a4fd6" stroke="#0b1a5c" />
        <circle cx="6" cy="9" r="2" fill="#d5e0ff" />
        <path d="M10 4l4-3 5 0-1 4-4 3-3-1z" fill="#eee" stroke="#333" />
      </>
    ),
  },
  {
    name: "Materials",
    art: (
      <>
        <path d="M2 18l1-6 5-4 4 4-5 5z" fill="#e9e9e9" stroke="#444" />
        <path d="M10 5l5-4 4 1-2 7-5 3z" fill="#d7432e" stroke="#5a160d" />
        <path d="M7 9l4-3 4 4-3 3z" fill="#ccc" stroke="#444" />
      </>
    ),
  },
  {
    name: "Help",
    art: (
      <>
        <rect x="1.500" y="1.500" width="17" height="17" fill="#fff" stroke="#19266d" />
        <rect x="2" y="2" width="16" height="3" fill="#2443c0" />
        <circle cx="10" cy="12" r="6" fill="#4b73ea" />
        <path d="M8 10.500q0-2 2-2t2 2q0 1-2 2v1M10 15v1.500" stroke="#fff" strokeWidth="1.400" fill="none" />
      </>
    ),
  },
  {
    name: "Libraries",
    art: (
      <>
        <path d="M2 16V4h6l2 2h7v3" fill="#ffe07a" stroke="#7a5900" />
        <path d="M2 16l3-8h14l-3 8z" fill="#ffd141" stroke="#7a5900" />
      </>
    ),
  },
  {
    name: "Page layout",
    art: (
      <>
        <path d="M4 1.500h9l4 4v13H4z" fill="#fff" stroke="#222" strokeWidth="1.400" />
        <path d="M6.500 7h7v9h-7zM10 7v9M6.500 11h7" fill="none" stroke="#333" />
      </>
    ),
  },
  {
    name: "Tools",
    art: (
      <>
        <path d="M1 3v16h15z" fill="#4e7cf0" stroke="#1c2f80" />
        <path d="M3 17L13 6" stroke="#ddd" strokeWidth="2.500" />
        <path d="M10 6l9 13" stroke="#222" strokeWidth="2.500" />
        <path d="M8 2l7-1 4 4-1 3-4-3-3 1z" fill="#ccc" stroke="#333" />
      </>
    ),
  },
  {
    name: "Notes",
    art: (
      <>
        <path d="M4 3h11v12l-3 3H2v-3h4z" fill="#f4f4f4" stroke="#444" />
        <path d="M7 7h5M7 10h4M7 13h3" stroke="#444" />
        <path d="M10 11l7-9 3 2-7 9z" fill="#f57a1f" stroke="#7c3300" strokeWidth=".7" />
      </>
    ),
  },
  {
    name: "Grid",
    art: (
      <>
        <rect x="1" y="2" width="18" height="16" fill="#a9acb3" stroke="#555" />
        <path d="M4 2v16M12 2v16M16 2v16M1 6h18M1 14h18" stroke="#888c94" strokeWidth=".7" />
        <path d="M8 2v8" stroke="#21a021" strokeWidth="1.300" />
        <path d="M8 10h11" stroke="#d84343" strokeWidth="1.300" />
      </>
    ),
  },
];

type Row = { label: string; kind?: "text" | "select" | "check" | "static" | "button" | "file"; value?: string; on?: boolean; dim?: boolean };

const SECTIONS: { title: string; rows: Row[] }[] = [
  {
    title: "Viewport",
    rows: [
      { label: "Title", value: "Top" },
      { label: "Width", value: "1279", dim: true },
      { label: "Height", value: "726", dim: true },
      { label: "Projection", kind: "select", value: "Parallel" },
      { label: "Locked", kind: "check" },
    ],
  },
  {
    title: "Camera",
    rows: [
      { label: "Lens Length(mm)", value: "50.0", dim: true },
      { label: "Rotation", value: "0.0" },
      { label: "X Location", value: "187.707" },
      { label: "Y Location", value: "81.752" },
      { label: "Z Location", value: "20.679" },
      { label: "Distance to Target", kind: "static", value: "12.440" },
      { label: "Location", kind: "button", value: "Place..." },
    ],
  },
  {
    title: "Target",
    rows: [
      { label: "X Target", value: "187.707" },
      { label: "Y Target", value: "81.752" },
      { label: "Z Target", value: "8.239" },
      { label: "Location", kind: "button", value: "Place..." },
    ],
  },
  {
    title: "Wallpaper",
    rows: [
      { label: "Filename", kind: "file", value: "(none)" },
      { label: "Show", kind: "check", on: true },
      { label: "Gray", kind: "check", on: true },
    ],
  },
];

function PropertyRow({ row, id }: { row: Row; id: string }) {
  const kind = row.kind ?? "text";
  const white = kind === "text" || kind === "select" || kind === "file";
  return (
    <div className="ml-5 flex h-[26px] border-b border-[#dfe1ea]">
      <label htmlFor={id} className={"flex w-[48%] shrink-0 items-center pl-1 " + (row.dim ? "text-[#7b7d83]" : "text-[#333]")}>{row.label}</label>
      <div className={"flex min-w-0 flex-1 items-center border-l border-[#dfe1ea] " + (white ? "bg-white" : "")}>
        {kind === "text" && <input id={id} defaultValue={row.value} className="h-full w-full bg-transparent pl-1 outline-none" />}
        {kind === "static" && <output id={id} className="pl-1">{row.value}</output>}
        {kind === "check" && <span className="pl-[3px]"><CheckBox id={id} checked={row.on} /></span>}
        {kind === "button" && (
          <button id={id} className="m-px h-6 flex-1 border border-[#adadad] bg-[#e1e1e1] text-black">{row.value}</button>
        )}
        {kind === "file" && (
          <>
            <input id={id} defaultValue={row.value} className="h-full min-w-0 flex-1 bg-transparent pl-[3px] outline-none" />
            <button aria-label="Browse" className="mr-px h-6 w-6 border border-[#adadad] bg-[#e1e1e1] text-black">...</button>
          </>
        )}
        {kind === "select" && (
          <span className="relative flex h-full flex-1 items-center">
            <select id={id} className="h-full w-full appearance-none bg-transparent pl-[3px] outline-none" defaultValue="Parallel">
              <option>Parallel</option>
              <option>Perspective</option>
            </select>
            <span className="pointer-events-none absolute right-px grid size-6 place-items-center border border-[#adadad] bg-[#e1e1e1]">
              <svg viewBox="0 0 10 6" className="h-1.5 w-2.5" fill="none"><path d="M1 1l4 4 4-4" stroke="#444" /></svg>
            </span>
          </span>
        )}
      </div>
    </div>
  );
}

function PropertiesPanel() {
  return (
    <aside className="flex w-[30%] flex-col pb-1.5 pl-[7px] text-sm text-[#333]">
      <div className="flex h-[26px] items-center gap-1.5 pl-[5px] pr-0.5">
        <h2>Properties: View properties</h2>
        <span className="h-[3px] flex-1 border-y border-[#cfd3e6]" />
      </div>
      <div className="flex h-7 items-stretch">
        {PANEL_TABS.map((t, i) => (
          <button
            key={t.name}
            title={t.name}
            className={"grid w-11 place-items-center " + (i === 0 ? "border-x border-t border-[#bfc5da]" : "border-b border-[#bfc5da]")}
          >
            <svg viewBox="0 0 20 20" className="size-5">{t.art}</svg>
          </button>
        ))}
        <div className="flex flex-1 items-center justify-end border-b border-[#bfc5da] pt-1 text-[#c5cadd]">
          <button aria-label="Panel options"><Gear className="size-5" /></button>
        </div>
      </div>
      <div className="mr-0.5 flex-1 border border-t-0 border-[#bfc5da] pl-2.5 pr-2">
        <div className="flex items-center gap-1.5 pt-0.5">
          <button aria-label="Camera properties" className="-ml-[3px] grid size-9 place-items-center bg-[#abbaee]">
            <svg viewBox="0 0 26 22" className="h-[22px] w-[26px]">
              <path d="M1 6q0-2 2-2h3V2h3l2-2h6l3 4h2q3 0 3 3v11q0 3-3 3H4q-3 0-3-3z" fill="#2b2b2b" />
              <path d="M11 2h6l2 3H9z" fill="#666" />
              <circle cx="15" cy="13" r="7" fill="#9a9a9a" />
              <circle cx="15" cy="13" r="5.500" fill="#111" />
              <circle cx="15" cy="13" r="3" fill="#3c5250" />
              <circle cx="13.500" cy="11.500" r="1.200" fill="#cfd8d8" />
            </svg>
          </button>
          <button aria-label="Viewport frame" className="grid h-7 w-[30px] place-items-center border-2 border-[#777] bg-[#a5a5a5]">
            <svg viewBox="0 0 24 22" className="h-[22px] w-6">
              <rect width="24" height="22" fill="#b9b9b9" />
              <rect x="1.500" y="1.500" width="21" height="19" fill="#e8f4fa" stroke="#5bbfe8" strokeWidth="1.500" />
              <rect x="4" y="4" width="16" height="14" fill="#fff" stroke="#e53b3b" strokeWidth="1.500" />
            </svg>
          </button>
        </div>
        <div className="pt-[11px]">
          {SECTIONS.map((s) => (
            <section key={s.title}>
              <h3 className="flex h-8 items-center border-b border-[#dfe1ea] text-base leading-8">{s.title}</h3>
              {s.rows.map((r) => (
                <PropertyRow key={r.label} row={r} id={(s.title + "-" + r.label).replace(/[^A-Za-z-]/g, "")} />
              ))}
            </section>
          ))}
        </div>
      </div>
    </aside>
  );
}

/* ---------- osnap + status ---------- */
const SNAPS: [string, boolean][] = [["End", true], ["Near", false], ["Point", false], ["Mid", true], ["Cen", false], ["Int", true], ["Perp", false], ["Tan", false], ["Quad", true], ["Knot", false], ["Vertex", false]];

function OsnapBar() {
  return (
    <div className="flex h-[30px] items-center pl-1 pt-1 text-sm text-[#333]">
      <span className="mr-[5px] h-6 w-[3px] border-x border-[#cfd3e3]" />
      <div className="flex items-center gap-2">
        {SNAPS.map(([n, on]) => (
          <span key={n} className="flex items-center gap-1">
            <CheckBox id={"snap-" + n} checked={on} />
            <label htmlFor={"snap-" + n}>{n}</label>
          </span>
        ))}
        {["Project", "Disable"].map((n) => (
          <span key={n} className="mr-2.5 flex items-center gap-[5px] pl-0.5">
            <CheckBox id={"snap-" + n} disabled />
            <label htmlFor={"snap-" + n}>{n}</label>
          </span>
        ))}
      </div>
    </div>
  );
}

function StatusBar() {
  const cell = "flex h-full items-center justify-center border-r border-[#bfc5da] whitespace-nowrap";
  return (
    <div className="flex h-[22px] items-center border-t border-[#bfc5da] text-sm text-[#333]">
      <button className={cell + " w-[60px]"}>CPlane</button>
      <span className={cell + " w-[108px]"}>x 175.458</span>
      <span className={cell + " w-[108px]"}>y 155.863</span>
      <span className={cell + " w-[108px]"}>z 0.000</span>
      <button className={cell + " w-[108px]"}>Meters</button>
      <button className="flex h-full w-52 items-center gap-1 border-r border-[#bfc5da] pl-1">
        <span className="size-3.5 border border-[#333] bg-black" />
        Default
      </button>
      <button className={cell + " w-[81px]"}>Grid Snap</button>
      <button className={cell + " w-[54px]"}>Ortho</button>
      <button className={cell + " w-[57px]"}>Planar</button>
      <button className={cell + " w-[58px] bg-[#d2daf0] font-bold"}>Osnap</button>
      <button className={cell + " w-[90px] bg-[#d2daf0] font-bold"}>SmartTrack</button>
      <button className={cell + " w-[72px] bg-[#d2daf0] font-bold"}>Gumball</button>
      <button className={cell + " w-[114px]"}>Record History</button>
      <button className={cell + " w-[48px]"}>Filter</button>
      <span className="pl-[3px]">Available physical memory: 261 MB</span>
    </div>
  );
}

/* ---------- taskbar ---------- */
const letter = (t: string, fill: string, size = 13, y = 15) => (
  <text x="10" y={y} textAnchor="middle" fontFamily="Liberation Sans" fontWeight="700" fontSize={size} fill={fill}>{t}</text>
);

const APPS: { name: string; open?: boolean; active?: boolean; art: React.ReactNode }[] = [
  { name: "Store", art: (<><path d="M7 4V1h6v3" fill="none" stroke="#3bb6f0" strokeWidth="1.500" /><rect x="0" y="3" width="20" height="16" rx="2" fill="#f3f3f3" /><path d="M6 7h3.500v3.500H6z" fill="#f25022" /><path d="M10.500 7H14v3.500h-3.500z" fill="#7fba00" /><path d="M6 11.500h3.500V15H6z" fill="#00a4ef" /><path d="M10.500 11.500H14V15h-3.500z" fill="#ffb900" /></>) },
  { name: "Edge", art: (<><circle cx="10" cy="10" r="10" fill="#1b7fd0" /><path d="M1 7C4-3 19-1 20 9c0 5-6 5-8 3 2-3 0-6-4-6-3 0-6 1-7 1z" fill="#3fcf8b" /><path d="M1 7c4-4 11-2 11 2-3-1-5 1-4 4 1 4 5 6 9 4-5 6-17 3-16-10z" fill="#0d56a8" /></>) },
  { name: "Spotify", art: (<><circle cx="10" cy="10" r="9.500" fill="#1ed760" /><path d="M4.500 7q6-2 11.500 1M5 10q5-1.500 10 1M5.500 13q4.500-1 8.500 1" stroke="#111" strokeWidth="1.500" fill="none" /></>) },
  { name: "Mendeley", art: (<><rect width="20" height="20" fill="#a9122b" /><path d="M5 12V8q2-2 2.500 1V11M7.500 9q2.500-4 5 0v2M12.500 9q.5-3 2.500-1v4" stroke="#fff" strokeWidth="2.200" fill="none" /><path d="M3 14h3M8.500 13h3M14 14h3" stroke="#fff" strokeWidth="2.500" /></>) },
  { name: "Explorer", art: (<><path d="M1 3h7l2 2h9v13H1z" fill="#f5b83d" /><path d="M1 7h18v9H1z" fill="#ffdc7a" /><path d="M4 11h12v8h-3v-4H7v4H4z" fill="#3e8fd8" /></>) },
  { name: "VS Code", open: true, art: (<><path d="M14 0l5 2v16l-5 2-7-8-5 4-2-1 5-5-5-5 2-1 5 4zM14 6l-5 4 5 4z" fill="#1e8ad6" /><path d="M14 0l5 2v16l-5 2z" fill="#35a8f2" /></>) },
  { name: "PyCharm", art: (<><rect x="1" y="1" width="18" height="18" fill="#000" stroke="#e8ee4a" strokeWidth="2" />{letter("PC", "#fff", 9, 11)}<path d="M4 15h6" stroke="#fff" strokeWidth="1.500" /></>) },
  { name: "Firefox", open: true, art: (<><circle cx="10" cy="11" r="9" fill="#ff7b1c" /><path d="M3 4q3 1 4 3Q9 2 12 0q1 4 5 6 3 5 1 9-3 5-9 5" fill="#ffbd2e" /><path d="M1 9q3 10 10 9 7-2 7-9 2 6-2 9-5 4-11 1-4-4-4-10z" fill="#f0305d" /><circle cx="10" cy="11" r="4.500" fill="#8a3ff0" /></>) },
  { name: "Python tool", art: (<><path d="M1 3l5-2 4 2v6l-5 3-4-3z" fill="#1477b8" /><path d="M11 2l3-1 4 2v4l-3 1-4-2zM10 9l4-1 4 2v4l-4 1-4-2zM11 16l4-1 3 2-3 3-4-1zM2 14l3-2 4 2v4l-3 2-4-2z" fill="#b7dff2" stroke="#5d8fac" strokeWidth=".6" /></>) },
  { name: "Revit", art: (<><rect width="20" height="20" fill="#dfe8f3" />{letter("R", "#1c5aa6", 18, 16)}</>) },
  { name: "R", art: (<><circle cx="10" cy="10" r="9.500" fill="#75aadb" /><text x="10" y="15" textAnchor="middle" fontFamily="Liberation Serif" fontSize="13" fill="#fff">R</text></>) },
  { name: "AutoCAD", art: (<><rect width="20" height="20" fill="#f3e6e4" />{letter("A", "#c2202b", 19, 17)}</>) },
  { name: "Publisher", art: (<><rect width="18" height="20" x="1" fill="#53626c" rx="1" /><path d="M1 1h10v8H7v10H1z" fill="#1aa0e6" /><path d="M9 4h5q2 0 2 3t-3 3h-3v6H8V9z" fill="#0c1216" /></>) },
  { name: "Loop", art: (<><circle cx="11" cy="10" r="7" fill="none" stroke="#18218c" strokeWidth="4" /><path d="M0 7h5M0 10h5M0 13h5" stroke="#ff3b1c" strokeWidth="1.500" /></>) },
  { name: "Teams", open: true, art: (<><circle cx="13" cy="3.500" r="3" fill="#7b83eb" /><circle cx="18" cy="5" r="2" fill="#5059c9" /><path d="M9 7h11v6q0 4-4 4-1 3-4 3-4-1-4-5z" fill="#5b63d3" /><rect x="0" y="5" width="11" height="11" rx="1" fill="#464eb8" /><path d="M3 8h5M5.500 8v6" stroke="#fff" strokeWidth="1.500" /></>) },
  { name: "Rhino", open: true, active: true, art: (<><rect width="20" height="20" fill="#111" /><path d="M1 1l3 6 2-5 3 6 5 3 4 4-3 5-4-2-5-5-4-5z" fill="#fff" /><text x="14" y="9" fontFamily="Liberation Sans" fontSize="9" fill="#fff">6</text></>) },
];

const TRAY: { name: string; art: React.ReactNode }[] = [
  { name: "Security", art: (<><path d="M1 3l7-2 4 3-1 8-8 1z" fill="#e6e6e6" /><circle cx="12" cy="12" r="4" fill="#d92b2b" /></>) },
  { name: "Drive", art: (<><rect width="16" height="16" fill="#fff" /><path d="M6 3h4l4 7h-4z" fill="#fbbc04" /><path d="M6 3l2 4-4 7-2-4z" fill="#0f9d58" /><path d="M6 10h8l-2 4H4z" fill="#4285f4" /></>) },
  { name: "Sync", art: (<><circle cx="8" cy="8" r="7.500" fill="#e9e9e9" /><path d="M12 6a4 4 0 1 0 0 4M12 3v4H8" stroke="#555" strokeWidth="1.500" fill="none" /></>) },
  { name: "Teams", art: (<><circle cx="9" cy="3" r="2.500" fill="#7b83eb" /><path d="M7 6h9v8H7z" fill="#5b63d3" /><rect y="4" width="9" height="9" fill="#464eb8" /><path d="M2 6.500h5M4.500 6.500v5" stroke="#fff" strokeWidth="1.200" /><circle cx="12" cy="12" r="3.500" fill="#6bb700" /></>) },
  { name: "Graphics", art: (<><rect y="2" width="16" height="12" fill="#121212" /><path d="M2 8q5-5 12-3v7q-6 2-9-1 6 1 7-3-5-3-10 0z" fill="#76b900" /></>) },
  { name: "Network share", art: (<><path d="M1 2h14v9H1z" fill="#cfe6f7" /><path d="M4 4h8v5H4z" fill="#5f9fd4" /><path d="M5 12h8v3H3z" fill="#e8a33a" /></>) },
  { name: "Monitor", art: (<><rect width="16" height="16" fill="#3f8f3a" /><path d="M2 3h5v5H2zM9 9h5v5H9z" fill="#a03c9a" /><path d="M9 3h5v4H9zM2 10h5v4H2z" fill="#5c4f2c" /></>) },
  { name: "Pen", art: (<><path d="M5 1l8 4-3 9-8-4z" fill="#fff" /><path d="M6 5l3 4M9 5l-3 5" stroke="#111" /></>) },
  { name: "OneDrive", art: (<path d="M4 13a3.500 3.500 0 0 1 0-7 5 5 0 0 1 9 1 3 3 0 0 1 0 6z" fill="#2f8fe8" />) },
  { name: "Cloud", art: (<path d="M4 13a3.500 3.500 0 0 1 0-7 5 5 0 0 1 9 1 3 3 0 0 1 0 6z" fill="#e6e6e6" />) },
  { name: "Battery", art: (<><path d="M3 5h12v7H3z" fill="none" stroke="#fff" /><path d="M5 7h8v3H5z" fill="#fff" /><path d="M1 3v6M0 5h4" stroke="#fff" strokeWidth="1.500" /></>) },
  { name: "Wi-Fi", art: (<path d="M2 13A11 11 0 0 1 13 3M5 14a8 8 0 0 1 9-8M8 14a5 5 0 0 1 6-5M11 14a3 3 0 0 1 3-2" stroke="#ddd" fill="none" strokeWidth="1.200" />) },
  { name: "Volume", art: (<><path d="M1 6h3l4-4v12l-4-4H1z" fill="none" stroke="#fff" /><path d="M10 5q2 3 0 6M12 3q4 5 0 10" stroke="#fff" fill="none" /></>) },
];

function Taskbar() {
  return (
    <footer className="flex h-[38px] items-stretch bg-[#101010] text-sm text-white">
      <button aria-label="Start" className="grid w-11 shrink-0 place-items-center">
        <svg viewBox="0 0 20 20" className="size-5" fill="#fff"><path d="M0 3l8-1v7.500H0zM9 1.800L20 0v9.500H9zM0 10.500h8V18l-8-1zM9 10.500h11V20L9 18.200z" /></svg>
      </button>
      <div className="flex flex-1 items-stretch pl-[18%]">
        {APPS.map((a) => (
          <button key={a.name} aria-label={a.name} className={"relative grid w-[46px] place-items-center " + (a.active ? "bg-[#333]" : "")}>
            <svg viewBox="0 0 20 20" className="size-5">{a.art}</svg>
            {a.open && <span className={"absolute bottom-0 h-[3px] bg-[#76b9ed] " + (a.active ? "inset-x-0" : "inset-x-1.5")} />}
          </button>
        ))}
      </div>
      <div className="flex shrink-0 items-center">
        {TRAY.map((t) => (
          <button key={t.name} aria-label={t.name} className="grid w-[30px] place-items-center">
            <svg viewBox="0 0 16 16" className="size-[18px]">{t.art}</svg>
          </button>
        ))}
        <button className="ml-2.5">POR</button>
        <time className="ml-4">09:31</time>
        <button aria-label="Notifications" className="ml-6 mr-8 grid place-items-center">
          <svg viewBox="0 0 18 18" className="size-[18px]"><path d="M1 1h16v12h-6l-3 4v-4H1z" fill="#fff" /><path d="M4 5h10M4 7.500h10M4 10h6" stroke="#101010" /></svg>
        </button>
      </div>
    </footer>
  );
}

export default function App() {
  return (
    <div className="flex h-screen flex-col overflow-hidden bg-[#e9eaef] font-['Open_Sans','Noto_Sans',sans-serif] text-[#111]">
      <TitleBar />
      <CommandArea />
      <ToolTabs />
      <div className="flex min-h-0 flex-1">
        <Sidebar />
        <Viewport />
        <PropertiesPanel />
      </div>
      <OsnapBar />
      <StatusBar />
      <Taskbar />
    </div>
  );
}
